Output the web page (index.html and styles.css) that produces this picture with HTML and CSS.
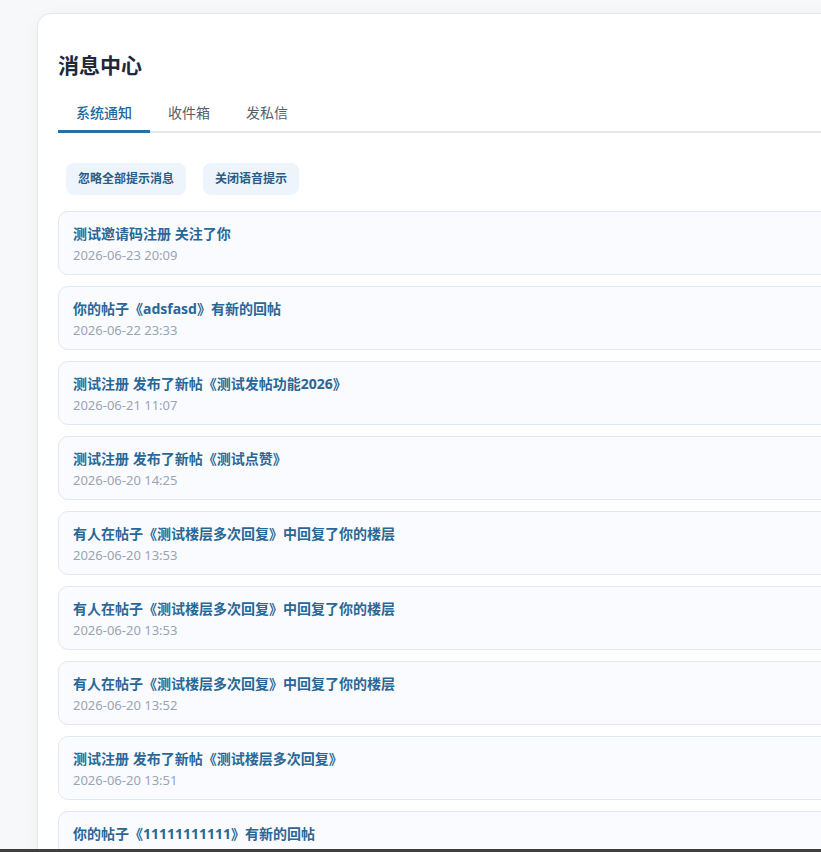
FILE: index.html
```html
<!doctype html>
<html>
<head>
<meta charset="utf-8">
<title>消息中心</title>
<link rel="stylesheet" href="styles.css">
</head>
<body>

<div class="msg_box">
    <h1 class="msg_title">消息中心</h1>
    <div class="tabs">
        <a href="javascript:;" class="tab active">系统通知</a>
        <a href="javascript:;" class="tab">收件箱</a>
        <a href="javascript:;" class="tab">发私信</a>
    </div>

    <div class="tools">
        <a href="javascript:;" class="tool_btn">忽略全部提示消息</a>
        <a href="javascript:;" class="tool_btn">关闭语音提示</a>
    </div>

    <ul class="msg_list">
        <li class="msg_item">
            <p class="msg_text">测试邀请码注册 关注了你</p>
            <p class="msg_time">2026-06-23 20:09</p>
        </li>
        <li class="msg_item">
            <p class="msg_text">你的帖子《adsfasd》有新的回帖</p>
            <p class="msg_time">2026-06-22 23:33</p>
        </li>
        <li class="msg_item">
            <p class="msg_text">测试注册 发布了新帖《测试发帖功能2026》</p>
            <p class="msg_time">2026-06-21 11:07</p>
        </li>
        <li class="msg_item">
            <p class="msg_text">测试注册 发布了新帖《测试点赞》</p>
            <p class="msg_time">2026-06-20 14:25</p>
        </li>
        <li class="msg_item">
            <p class="msg_text">有人在帖子《测试楼层多次回复》中回复了你的楼层</p>
            <p class="msg_time">2026-06-20 13:53</p>
        </li>
        <li class="msg_item">
            <p class="msg_text">有人在帖子《测试楼层多次回复》中回复了你的楼层</p>
            <p class="msg_time">2026-06-20 13:53</p>
        </li>
        <li class="msg_item">
            <p class="msg_text">有人在帖子《测试楼层多次回复》中回复了你的楼层</p>
            <p class="msg_time">2026-06-20 13:52</p>
        </li>
        <li class="msg_item">
            <p class="msg_text">测试注册 发布了新帖《测试楼层多次回复》</p>
            <p class="msg_time">2026-06-20 13:51</p>
        </li>
        <li class="msg_item">
            <p class="msg_text">你的帖子《11111111111》有新的回帖</p>
            <p class="msg_time">2026-06-20 13:50</p>
        </li>
    </ul>
</div>

<div class="scroll_line"></div>

</body>
</html>
```

FILE: styles.css
```css
*{margin:0;padding:0;}
html,body{overflow:hidden;}
body{background:#f7f8fa; font-family:"Noto Sans","Noto Sans CJK SC",sans-serif; height:852px;}
ul{list-style:none;}
a{text-decoration:none;}

.msg_box{width:860px; margin:13px 0 0 37px; background:#fff; border:1px solid #e3e8ee; border-radius:14px; box-shadow:0 4px 18px rgba(15,23,42,0.04); padding:35px 20px 20px 20px; height:900px;}
.msg_title{font-size:21px; line-height:32px; color:#1e293b; font-weight:700;}

.tabs{display:flex; margin-top:15px; border-bottom:2px solid #e2e8f0;}
.tab{padding:0 18px; font-size:14px; line-height:34px; color:#555e6a; border-bottom:3px solid transparent; margin-bottom:-2px;}
.tab.active{color:#24679c; font-weight:500; border-bottom-color:#2570a6;}

.tools{display:flex; gap:17px; margin:30px 0 0 8px;}
.tool_btn{height:32px; line-height:32px; padding:0 12px; background:#edf4fb; color:#2b5d85; border-radius:8px; font-size:12px; font-weight:700;}

.msg_list{display:flex; flex-direction:column; gap:11px; margin-top:16px;}
.msg_item{height:64px; box-sizing:border-box; background:#f9fbfe; border:1px solid #e2e8f0; border-radius:10px; padding:12px 14px 0 14px;}
.msg_text{font-size:14px; line-height:20px; font-weight:700; color:#2a6796;}
.msg_time{font-size:13px; line-height:20px; color:#9aa5b4; margin-top:1px;}

.scroll_line{position:fixed; left:0; right:0; bottom:0; height:3px; background:#3f3f3f;}
```
